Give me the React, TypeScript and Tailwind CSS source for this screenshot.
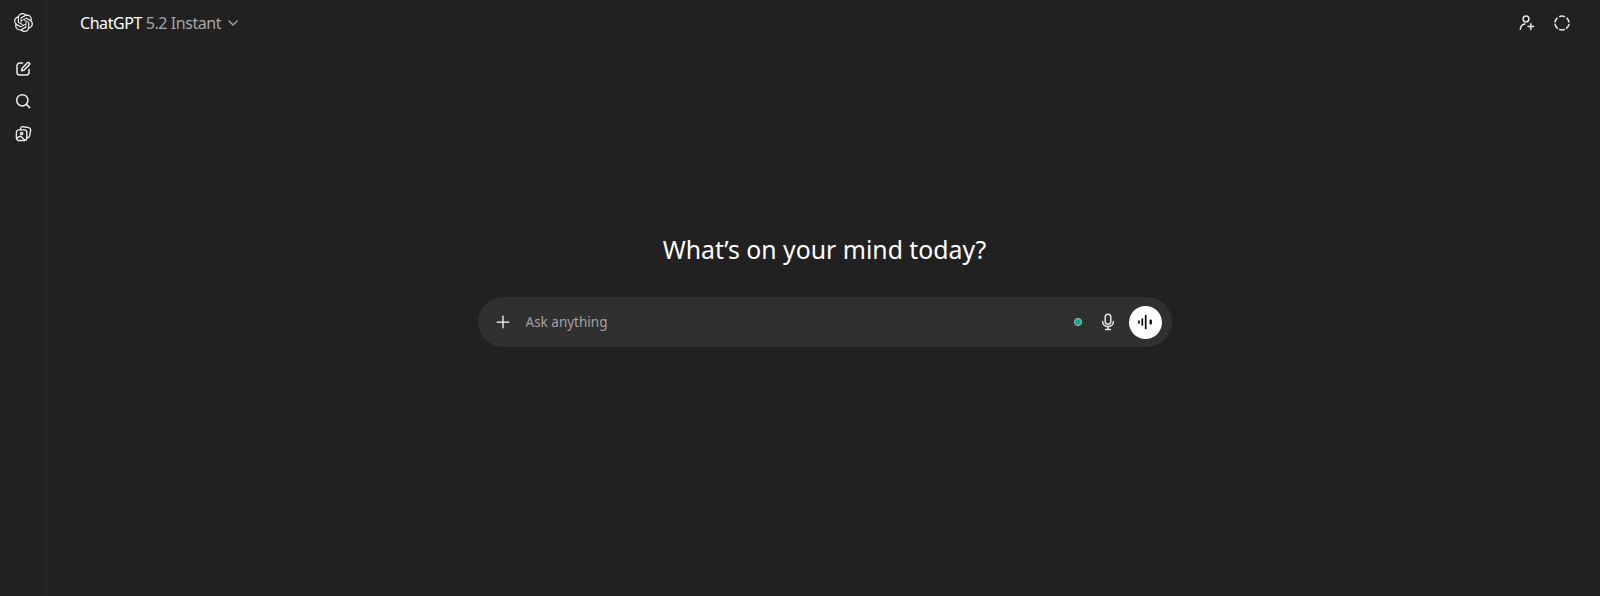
import { Plus, ChevronDown } from "lucide-react";
import { SiOpenai } from "react-icons/si";

function EditIcon() {
  return (
    <svg width="16" height="16" viewBox="0 0 16 16" fill="none" stroke="currentColor" strokeWidth="1.5" strokeLinecap="round" strokeLinejoin="round">
      <path d="M7.5 2H4.8C3.2 2 2 3.2 2 4.8v6.4C2 12.8 3.2 14 4.8 14h6.4c1.6 0 2.8-1.2 2.8-2.8V8.5" />
      <path d="M12.2 1.9a1.4 1.4 0 0 1 2 2L9 9.2 6.6 9.8l.5-2.5z" />
    </svg>
  );
}
function SearchIcon() {
  return (
    <svg width="16" height="16" viewBox="0 0 16 16" fill="none" stroke="currentColor" strokeWidth="1.5" strokeLinecap="round">
      <circle cx="7.3" cy="7.3" r="5.6" />
      <path d="M11.4 11.4L14.6 14.6" />
    </svg>
  );
}
function ImagesIcon() {
  return (
    <svg width="17" height="17" viewBox="0 0 16 16" fill="none" stroke="currentColor" strokeWidth="1.3" strokeLinecap="round" strokeLinejoin="round">
      <rect x="1.3" y="4.6" width="9.8" height="10" rx="2.4" />
      <path d="M5 4.4l.2-1c.3-1.2 1.4-2 2.6-1.8l5 .9c1.3.2 2.1 1.4 1.9 2.7l-.9 5c-.2 1-1 1.7-2 1.8" />
      <circle cx="6.2" cy="8" r="1.1" />
      <path d="M1.6 12.6l2.5-1.7c.6-.4 1.3-.3 1.8.1l3 2.8" />
    </svg>
  );
}
function UserPlusIcon() {
  return (
    <svg width="16" height="16" viewBox="0 0 16 16" fill="none" stroke="currentColor" strokeWidth="1.5" strokeLinecap="round">
      <circle cx="7" cy="4" r="2.9" />
      <path d="M1.3 14.3c.3-3 2-5 4.6-5.3" />
      <path d="M11.8 8.8v5.6M9 11.6h5.6" />
    </svg>
  );
}
function DashedCircleIcon() {
  return (
    <svg width="16" height="16" viewBox="0 0 16 16" fill="none" stroke="currentColor" strokeWidth="1.6" strokeLinecap="round">
      <path d="M5.8 1.4A7 7 0 0 1 10.2 1.4" />
      <path d="M13 3.2a7 7 0 0 1 1.9 3.6" />
      <path d="M14.9 9.6a7 7 0 0 1-2.2 3.6" />
      <path d="M10.3 14.6a7 7 0 0 1-4.6 0" />
      <path d="M3.2 13.1a7 7 0 0 1-2.1-3.7" />
      <path d="M1.1 6.8a7 7 0 0 1 1.9-3.6" />
    </svg>
  );
}
function MicIcon() {
  return (
    <svg width="16" height="18" viewBox="0 0 16 18" fill="none" stroke="currentColor" strokeWidth="1.5" strokeLinecap="round">
      <rect x="5.2" y="1.2" width="5.6" height="10" rx="2.8" />
      <path d="M2.6 8.6c0 3 2.4 5 5.4 5s5.4-2 5.4-5" />
      <path d="M8 13.6v3M5.6 16.6h4.8" />
    </svg>
  );
}
function WaveIcon() {
  return (
    <svg width="18" height="18" viewBox="0 0 18 18" fill="none" stroke="#0d0d0d" strokeLinecap="round">
      <path d="M3 8v2M6.3 6v6M9.7 2.5v13" strokeWidth="1.7" />
      <path d="M14.7 7.8v2.4" strokeWidth="2.4" />
    </svg>
  );
}

export default function App() {
  return (
    <div className="flex h-[596px] w-full overflow-hidden bg-[#212121] font-['Noto_Sans','Open_Sans',sans-serif] text-white">
      <aside className="flex w-[47px] shrink-0 flex-col items-center border-r border-[#2a2a2a] pt-[13px] text-[#ececec]">
        <SiOpenai className="h-[19px] w-[19px]" />
        <div className="mt-[29px] flex flex-col items-center gap-4">
          <EditIcon />
          <SearchIcon />
          <ImagesIcon />
        </div>
      </aside>
      <div className="flex min-w-0 flex-1 flex-col">
        <header className="flex h-[45px] shrink-0 items-center justify-between pl-[33px] pr-[30px]">
          <div className="flex items-center text-[16px] tracking-[-0.45px]">
            <span className="text-white">ChatGPT</span>
            <span className="ml-[4px] text-[#a6a6a6]">5.2 Instant</span>
            <ChevronDown className="ml-[4px] h-[16px] w-[16px] text-[#a6a6a6]" />
          </div>
          <div className="flex items-center gap-[19px] text-[#e6e6e6]">
            <UserPlusIcon />
            <DashedCircleIcon />
          </div>
        </header>
        <main className="flex flex-1 flex-col items-center pl-[2px] pt-[188px]">
          <h1 className="text-[24.8px] font-normal leading-[32px] text-white">What’s on your mind today?</h1>
          <div className="mt-[32px] flex h-[50px] w-[694px] items-center rounded-full bg-[#303030] pl-[15px] pr-[10px]">
            <Plus className="h-[20px] w-[20px] text-white" strokeWidth={1.5} />
            <span className="ml-[13px] flex-1 text-[13.5px] text-[#a3a3a3]">Ask anything</span>
            <span className="h-[8px] w-[8px] rounded-full border border-[#a6c8c2] bg-[#14a58c]" />
            <span className="ml-[18px] flex text-[#e6e6e6]"><MicIcon /></span>
            <span className="ml-[13px] flex h-[33px] w-[33px] items-center justify-center rounded-full bg-white"><WaveIcon /></span>
          </div>
        </main>
      </div>
    </div>
  );
}
